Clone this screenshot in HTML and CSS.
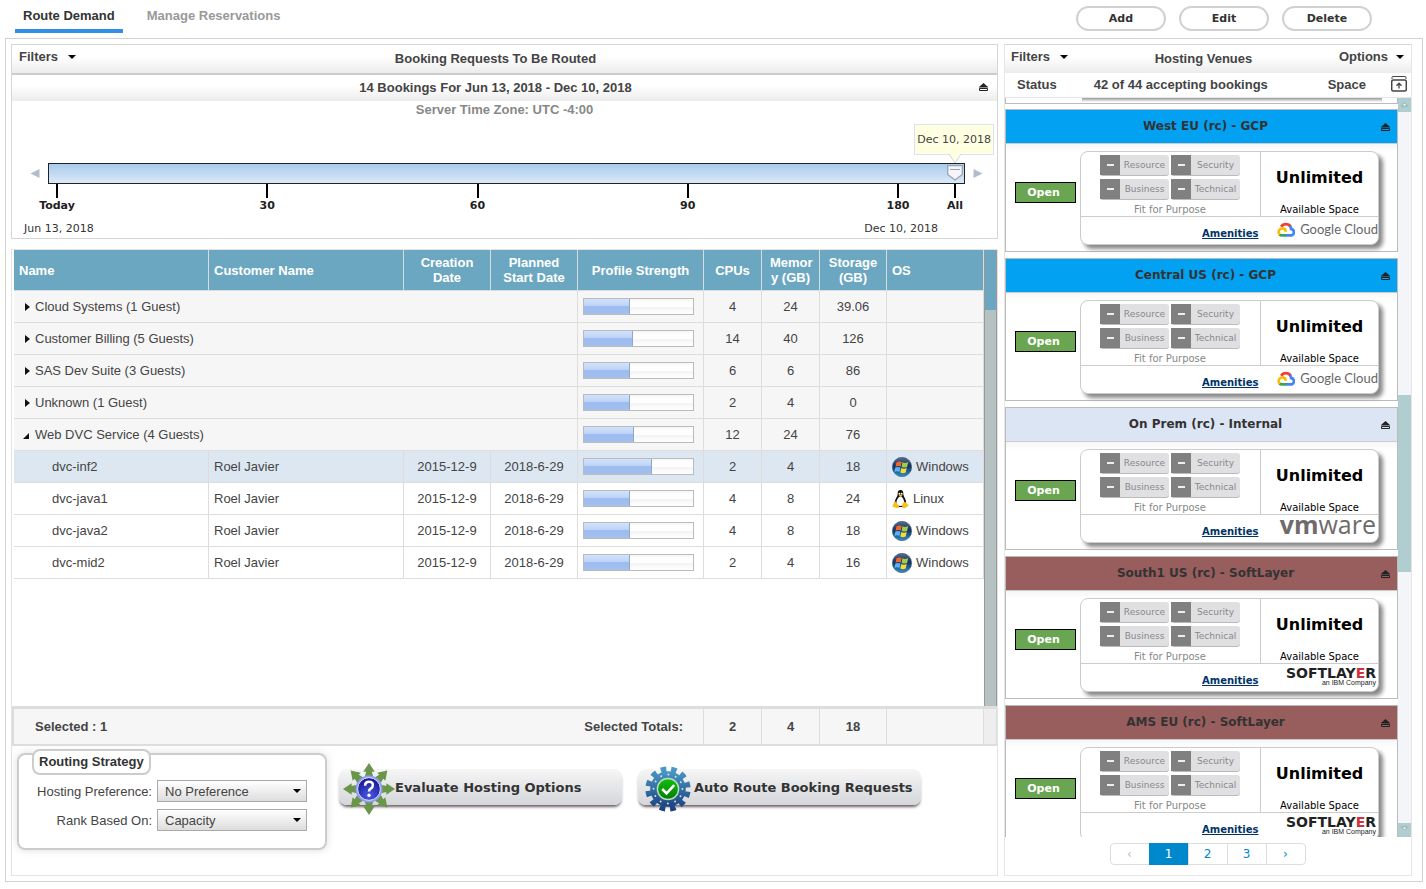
FILE: index.html
```html
<!DOCTYPE html>
<html lang="en">
<head>
    <meta charset="UTF-8">
    <meta name="viewport" content="width=device-width, initial-scale=1.0">
    <title>Route Demand</title>
    <link rel="stylesheet" href="styles.css">
</head>
<body>

    <!-- shared icons -->
    <svg class="sprite" aria-hidden="true">
        <defs>
            <linearGradient id="cogFill" x1="0" y1="0" x2="0" y2="1">
                <stop offset="0" stop-color="#4a97c4"/>
                <stop offset="1" stop-color="#1c4480"/>
            </linearGradient>
            <radialGradient id="ballFill" cx="0.5" cy="0.8" r="0.7">
                <stop offset="0" stop-color="#4a5ae8"/>
                <stop offset="1" stop-color="#1c1c94"/>
            </radialGradient>
            <linearGradient id="okFill" x1="0" y1="0" x2="0" y2="1">
                <stop offset="0" stop-color="#12c012"/>
                <stop offset="1" stop-color="#057a05"/>
            </linearGradient>
            <linearGradient id="orbFill" x1="0" y1="0" x2="0" y2="1">
                <stop offset="0" stop-color="#5b6c8a"/>
                <stop offset="0.45" stop-color="#16305c"/>
                <stop offset="1" stop-color="#2f93c8"/>
            </linearGradient>
            <path id="arrowOut" d="M0-27l6 9h-3l2 8h-10l2-8h-3z"/>
        </defs>
        <symbol id="eject" viewBox="0 0 9 8">
            <path d="M4.500 0l4.500 4v.5h-9v-.5z" fill="#222"/>
            <path d="M.5 5.500h8v2h-8z" fill="none" stroke="#222"/>
        </symbol>
        <symbol id="caret" viewBox="0 0 8 4">
            <path d="M0 0h8l-4 4z" fill="#000"/>
        </symbol>
        <symbol id="windows" viewBox="0 0 20 20">
            <circle cx="10" cy="10" r="9.700" fill="url(#orbFill)" stroke="#38577f" stroke-width=".6"/>
            <path d="M4.400 5.400q2.700-1.700 5.300-.3l-1 4.600q-2.500-1.400-5.200.2z" fill="#f0652f"/>
            <path d="M10.500 5.300q2.700 1.400 5.700-.2l-1.100 4.800q-2.900 1.400-5.500 0z" fill="#9ad04c"/>
            <path d="M3.300 10.800q2.600-1.500 5.200-.2l-1 4.400q-2.500-1.400-5.100.1z" fill="#53b4f8"/>
            <path d="M9.300 11q2.600 1.500 5.500 0l-1.100 4.500q-2.900 1.500-5.400 0z" fill="#fcd93b"/>
        </symbol>
        <symbol id="linux" viewBox="0 0 18 20">
            <path d="M9 .5c-2.600 0-3.200 2-3 4.500.1 2.200-3 5-3.200 8.500 0 3 3 5 6.200 5s6-2 6-5c0-3.500-2.900-6-3-8.500.1-2.500-.4-4.500-3-4.500z" fill="#111"/>
            <path d="M9 7c-1.500 0-4.500 4-4.300 7 .1 2.400 1.800 3.500 4.300 3.500s4.100-1 4.100-3.500c0-3-2.600-7-4.100-7z" fill="#fff"/>
            <circle cx="7.800" cy="4.500" r="1" fill="#fff"/>
            <circle cx="10.300" cy="4.500" r="1" fill="#fff"/>
            <path d="M7 6.200l2-1 2.200 1-2.100 1.600z" fill="#f5b400"/>
            <path d="M3.500 12.500l3.800 4.800c.8 1.700-.6 2.700-2.200 2.200l-4.600-1.300.6-2.500z" fill="#f5c211"/>
            <path d="M14 13l-3 1.800v3.300c.2 1.900 1.700 2.100 3 1.300l3.800-2.500-1.600-1.800z" fill="#f5c211"/>
        </symbol>
        <symbol id="gcloud" viewBox="0 0 18 15">
            <path d="M4.200 4.800a5.500 5.500 0 0 1 9.400 0" fill="none" stroke="#ea4335" stroke-width="2.800"/>
            <path d="M13 4.200q1 1.200 1.200 2.800a3.200 3.200 0 0 1-1 6.400h-4.200" fill="none" stroke="#4285f4" stroke-width="2.800"/>
            <path d="M9 13.400h-4q-1.500 0-2.500-1" fill="none" stroke="#34a853" stroke-width="2.800"/>
            <path d="M2.700 12.600c-2.300-2.800-.2-6.400 2.800-6.200 2.200.2 3.200 2 3.200 3.400" fill="none" stroke="#fbbc05" stroke-width="2.600"/>
        </symbol>
        <symbol id="question" viewBox="-27 -27 54 54">
            <g fill="#6a964c">
                <use href="#arrowOut"/>
                <use href="#arrowOut" transform="rotate(45)"/>
                <use href="#arrowOut" transform="rotate(90)"/>
                <use href="#arrowOut" transform="rotate(135)"/>
                <use href="#arrowOut" transform="rotate(180)"/>
                <use href="#arrowOut" transform="rotate(225)"/>
                <use href="#arrowOut" transform="rotate(270)"/>
                <use href="#arrowOut" transform="rotate(315)"/>
            </g>
            <circle r="14" fill="#8f9df5"/>
            <circle r="11.800" fill="url(#ballFill)" stroke="#dfe4ff"/>
            <path d="M-4-3.500q0-4 4-4t4 3.500q0 2-2 3.300-2 1.200-2 3.200" fill="none" stroke="#fff" stroke-width="2.600"/>
            <circle cy="6.500" r="1.700" fill="#fff"/>
        </symbol>
        <symbol id="cog" viewBox="-27 -27 54 54">
            <circle r="20.500" fill="none" stroke="url(#cogFill)" stroke-width="6" stroke-dasharray="5.600 5.130" stroke-dashoffset="8"/>
            <circle r="18.500" fill="url(#cogFill)"/>
            <circle r="15" fill="none" stroke="#cfe6f2" stroke-width="2" stroke-linecap="round" stroke-dasharray="0 7.854"/>
            <circle r="11" fill="url(#okFill)" stroke="#b9e0b9" stroke-width="1.500"/>
            <path d="M-6 0l4.500 4.500 8-8.500" fill="none" stroke="#fff" stroke-width="2.600"/>
        </symbol>
    </svg>

    <header class="topbar">
        <nav class="tabs">
            <a href="#" class="tab active">Route Demand</a>
            <a href="#" class="tab">Manage Reservations</a>
        </nav>
        <div class="actions">
            <button type="button" class="pill">Add</button>
            <button type="button" class="pill">Edit</button>
            <button type="button" class="pill">Delete</button>
        </div>
    </header>

    <main class="frame">

        <section class="left">
            <div class="bookings">
                <div class="panel-head">
                    <button type="button" class="menu">Filters <svg class="caret"><use href="#caret"/></svg></button>
                    <h2>Booking Requests To Be Routed</h2>
                </div>
                <div class="panel-head sub-head">
                    <h2>14 Bookings For Jun 13, 2018 - Dec 10, 2018</h2>
                    <svg class="eject"><use href="#eject"/></svg>
                </div>
                <p class="zone">Server Time Zone: UTC -4:00</p>

                <div class="slider">
                    <svg class="step" viewBox="0 0 9 9"><path d="M9 0v9l-9-4.500z"/></svg>
                    <div class="slider-box">
                        <input type="range" class="track" min="0" max="181" value="181" aria-label="Booking date">
                        <div class="tip">Dec 10, 2018</div>
                        <svg class="tip-arrow" viewBox="0 0 14 10"><path d="M1 0l6 9 6-9" fill="#ffffe1" stroke="#ccd3e6"/></svg>
                        <svg class="handle" viewBox="0 0 16 16"><path d="M.7.7h14.600v8.800l-7.300 5.500-7.300-5.500z" fill="#f6f6fa" stroke="#9aa3b5" stroke-width="1.300"/><path d="M3 4.500h10" stroke="#9aa3b5"/></svg>
                    </div>
                    <svg class="step" viewBox="0 0 9 9"><path d="M0 0v9l9-4.500z"/></svg>
                </div>
                <div class="scale">
                    <div class="scale-days">
                        <span class="mark">Today</span>
                        <span class="mark">30</span>
                        <span class="mark">60</span>
                        <span class="mark">90</span>
                        <span class="mark">180</span>
                    </div>
                    <span class="mark mark-all">All</span>
                </div>
                <div class="range">
                    <span>Jun 13, 2018</span>
                    <span>Dec 10, 2018</span>
                </div>
            </div>

            <div class="requests">
                <div class="grid">
                    <table class="grid-table">
                        <colgroup>
                            <col><col><col class="c-date"><col class="c-date"><col class="c-profile">
                            <col class="c-num"><col class="c-num"><col class="c-store"><col class="c-os">
                        </colgroup>
                        <thead>
                            <tr>
                                <th class="txt">Name</th>
                                <th class="txt">Customer Name</th>
                                <th>Creation Date</th>
                                <th>Planned Start Date</th>
                                <th>Profile Strength</th>
                                <th>CPUs</th>
                                <th>Memor<br>y (GB)</th>
                                <th>Storage (GB)</th>
                                <th class="txt">OS</th>
                            </tr>
                        </thead>
                        <tbody>
                            <tr class="group">
                                <td class="txt" colspan="4"><i class="closed"></i>Cloud Systems (1 Guest)</td>
                                <td><div class="bar"><span style="width:42%"></span></div></td>
                                <td>4</td>
                                <td>24</td>
                                <td>39.06</td>
                                <td></td>
                            </tr>
                            <tr class="group">
                                <td class="txt" colspan="4"><i class="closed"></i>Customer Billing (5 Guests)</td>
                                <td><div class="bar"><span style="width:45%"></span></div></td>
                                <td>14</td>
                                <td>40</td>
                                <td>126</td>
                                <td></td>
                            </tr>
                            <tr class="group">
                                <td class="txt" colspan="4"><i class="closed"></i>SAS Dev Suite (3 Guests)</td>
                                <td><div class="bar"><span style="width:42%"></span></div></td>
                                <td>6</td>
                                <td>6</td>
                                <td>86</td>
                                <td></td>
                            </tr>
                            <tr class="group">
                                <td class="txt" colspan="4"><i class="closed"></i>Unknown (1 Guest)</td>
                                <td><div class="bar"><span style="width:42%"></span></div></td>
                                <td>2</td>
                                <td>4</td>
                                <td>0</td>
                                <td></td>
                            </tr>
                            <tr class="group">
                                <td class="txt" colspan="4"><i class="opened"></i>Web DVC Service (4 Guests)</td>
                                <td><div class="bar"><span style="width:46%"></span></div></td>
                                <td>12</td>
                                <td>24</td>
                                <td>76</td>
                                <td></td>
                            </tr>
                            <tr class="selected">
                                <td class="txt guest">dvc-inf2</td>
                                <td class="txt">Roel Javier</td>
                                <td>2015-12-9</td>
                                <td>2018-6-29</td>
                                <td><div class="bar"><span style="width:62%"></span></div></td>
                                <td>2</td>
                                <td>4</td>
                                <td>18</td>
                                <td class="txt"><span class="os"><svg class="os-icon"><use href="#windows"/></svg>Windows</span></td>
                            </tr>
                            <tr>
                                <td class="txt guest">dvc-java1</td>
                                <td class="txt">Roel Javier</td>
                                <td>2015-12-9</td>
                                <td>2018-6-29</td>
                                <td><div class="bar"><span style="width:42%"></span></div></td>
                                <td>4</td>
                                <td>8</td>
                                <td>24</td>
                                <td class="txt"><span class="os"><svg class="os-icon linux"><use href="#linux"/></svg>Linux</span></td>
                            </tr>
                            <tr>
                                <td class="txt guest">dvc-java2</td>
                                <td class="txt">Roel Javier</td>
                                <td>2015-12-9</td>
                                <td>2018-6-29</td>
                                <td><div class="bar"><span style="width:42%"></span></div></td>
                                <td>4</td>
                                <td>8</td>
                                <td>18</td>
                                <td class="txt"><span class="os"><svg class="os-icon"><use href="#windows"/></svg>Windows</span></td>
                            </tr>
                            <tr>
                                <td class="txt guest">dvc-mid2</td>
                                <td class="txt">Roel Javier</td>
                                <td>2015-12-9</td>
                                <td>2018-6-29</td>
                                <td><div class="bar"><span style="width:42%"></span></div></td>
                                <td>2</td>
                                <td>4</td>
                                <td>16</td>
                                <td class="txt"><span class="os"><svg class="os-icon"><use href="#windows"/></svg>Windows</span></td>
                            </tr>
                        </tbody>
                    </table>
                    <div class="grid-scroll"></div>
                </div>

                <div class="totals">
                    <span class="picked">Selected : 1</span>
                    <span class="totals-label">Selected Totals:</span>
                    <span class="total">2</span>
                    <span class="total">4</span>
                    <span class="total store">18</span>
                    <span class="total os-total"></span>
                    <span class="total-end"></span>
                </div>

                <div class="routing">
                    <form class="strategy">
                        <h3>Routing Strategy</h3>
                        <label for="preference">Hosting Preference:</label>
                        <div class="select">
                            <select id="preference"><option>No Preference</option></select>
                            <svg class="caret"><use href="#caret"/></svg>
                        </div>
                        <label for="rank">Rank Based On:</label>
                        <div class="select">
                            <select id="rank"><option>Capacity</option></select>
                            <svg class="caret"><use href="#caret"/></svg>
                        </div>
                    </form>
                    <button type="button" class="big"><svg class="big-icon"><use href="#question"/></svg>Evaluate Hosting Options</button>
                    <button type="button" class="big"><svg class="big-icon"><use href="#cog"/></svg>Auto Route Booking Requests</button>
                </div>
            </div>
        </section>

        <section class="right">
            <div class="panel-head venues-head">
                <button type="button" class="menu">Filters <svg class="caret"><use href="#caret"/></svg></button>
                <h2>Hosting Venues</h2>
                <button type="button" class="menu options">Options <svg class="caret"><use href="#caret"/></svg></button>
            </div>
            <div class="venues-sub">
                <span>Status</span>
                <span>42 of 44 accepting bookings</span>
                <span class="space">Space</span>
                <svg class="collapse" viewBox="0 0 16 16" fill="none" stroke="#444"><path d="M1 3v-1.500q0-1 1-1h12q1 0 1 1v1.500"/><rect x=".7" y="4" width="14.600" height="11" rx="1.500" stroke-width="1.500"/><path d="M8 12.500v-5m-2.500 2.200l2.500-2.500 2.500 2.500" stroke-width="1.300"/></svg>
            </div>

            <div class="venues">
                <div class="venue-list">
                    <div class="venue-peek"></div>

                    <article class="venue">
                        <h3 class="gcp">West EU (rc) - GCP<svg class="eject"><use href="#eject"/></svg></h3>
                        <div class="venue-body">
                            <button type="button" class="open">Open</button>
                            <div class="info">
                                <div class="fit">
                                    <div class="chips">
                                        <span class="chip"><b></b>Resource</span>
                                        <span class="chip"><b></b>Security</span>
                                        <span class="chip"><b></b>Business</span>
                                        <span class="chip"><b></b>Technical</span>
                                    </div>
                                    <p>Fit for Purpose</p>
                                </div>
                                <div class="space-left"><strong>Unlimited</strong><p>Available Space</p></div>
                                <div class="extras">
                                    <a href="#">Amenities</a>
                                    <span class="brand google"><svg><use href="#gcloud"/></svg><span>Google Cloud</span></span>
                                </div>
                            </div>
                        </div>
                    </article>

                    <article class="venue">
                        <h3 class="gcp">Central US (rc) - GCP<svg class="eject"><use href="#eject"/></svg></h3>
                        <div class="venue-body">
                            <button type="button" class="open">Open</button>
                            <div class="info">
                                <div class="fit">
                                    <div class="chips">
                                        <span class="chip"><b></b>Resource</span>
                                        <span class="chip"><b></b>Security</span>
                                        <span class="chip"><b></b>Business</span>
                                        <span class="chip"><b></b>Technical</span>
                                    </div>
                                    <p>Fit for Purpose</p>
                                </div>
                                <div class="space-left"><strong>Unlimited</strong><p>Available Space</p></div>
                                <div class="extras">
                                    <a href="#">Amenities</a>
                                    <span class="brand google"><svg><use href="#gcloud"/></svg><span>Google Cloud</span></span>
                                </div>
                            </div>
                        </div>
                    </article>

                    <article class="venue">
                        <h3 class="internal">On Prem (rc) - Internal<svg class="eject"><use href="#eject"/></svg></h3>
                        <div class="venue-body">
                            <button type="button" class="open">Open</button>
                            <div class="info">
                                <div class="fit">
                                    <div class="chips">
                                        <span class="chip"><b></b>Resource</span>
                                        <span class="chip"><b></b>Security</span>
                                        <span class="chip"><b></b>Business</span>
                                        <span class="chip"><b></b>Technical</span>
                                    </div>
                                    <p>Fit for Purpose</p>
                                </div>
                                <div class="space-left"><strong>Unlimited</strong><p>Available Space</p></div>
                                <div class="extras">
                                    <a href="#">Amenities</a>
                                    <span class="brand vmware"><b>vm</b>ware</span>
                                </div>
                            </div>
                        </div>
                    </article>

                    <article class="venue">
                        <h3 class="softlayer">South1 US (rc) - SoftLayer<svg class="eject"><use href="#eject"/></svg></h3>
                        <div class="venue-body">
                            <button type="button" class="open">Open</button>
                            <div class="info">
                                <div class="fit">
                                    <div class="chips">
                                        <span class="chip"><b></b>Resource</span>
                                        <span class="chip"><b></b>Security</span>
                                        <span class="chip"><b></b>Business</span>
                                        <span class="chip"><b></b>Technical</span>
                                    </div>
                                    <p>Fit for Purpose</p>
                                </div>
                                <div class="space-left"><strong>Unlimited</strong><p>Available Space</p></div>
                                <div class="extras">
                                    <a href="#">Amenities</a>
                                    <span class="brand soft">SOFTLAY<em>E</em>R<small>an IBM Company</small></span>
                                </div>
                            </div>
                        </div>
                    </article>

                    <article class="venue">
                        <h3 class="softlayer">AMS EU (rc) - SoftLayer<svg class="eject"><use href="#eject"/></svg></h3>
                        <div class="venue-body">
                            <button type="button" class="open">Open</button>
                            <div class="info">
                                <div class="fit">
                                    <div class="chips">
                                        <span class="chip"><b></b>Resource</span>
                                        <span class="chip"><b></b>Security</span>
                                        <span class="chip"><b></b>Business</span>
                                        <span class="chip"><b></b>Technical</span>
                                    </div>
                                    <p>Fit for Purpose</p>
                                </div>
                                <div class="space-left"><strong>Unlimited</strong><p>Available Space</p></div>
                                <div class="extras">
                                    <a href="#">Amenities</a>
                                    <span class="brand soft">SOFTLAY<em>E</em>R<small>an IBM Company</small></span>
                                </div>
                            </div>
                        </div>
                    </article>
                </div>
                <div class="venue-scroll">
                    <svg viewBox="0 0 12 14"><path d="M3 8l3-3 3 3z" fill="#fff" stroke="#8aa"/></svg>
                    <div class="thumb"></div>
                    <svg viewBox="0 0 12 14"><path d="M3 4l3 3 3-3z" fill="#fff" stroke="#8aa"/></svg>
                </div>
            </div>

            <nav class="pager">
                <button type="button" disabled>‹</button>
                <button type="button" class="current">1</button>
                <button type="button">2</button>
                <button type="button">3</button>
                <button type="button">›</button>
            </nav>
        </section>
    </main>

</body>
</html>
```

FILE: styles.css
```css
* {
    box-sizing: border-box;
}

body {
    margin: 0;
    background-color: #fff;
    color: #444;
    font-family: 'Liberation Sans', Arial, sans-serif;
    font-size: 13px;
    line-height: 15px;
}

h2, h3, p {
    margin: 0;
    font-size: 13px;
}

button, select, input {
    margin: 0;
    font-family: inherit;
    font-size: 13px;
    color: inherit;
}

svg {
    display: block;
    flex: none;
}

.sprite {
    position: absolute;
    width: 0;
    height: 0;
}

.caret {
    width: 8px;
    height: 4px;
}

.eject {
    width: 9px;
    height: 8px;
}

/* top bar */
.topbar {
    display: flex;
    justify-content: space-between;
    padding: 0 54px 0 15px;
    height: 38px;
}

.tabs {
    display: flex;
    gap: 16px;
}

.tab {
    height: 33px;
    padding: 8px 8px 0;
    border-bottom: 4px solid transparent;
    color: #999;
    font-weight: bold;
    text-decoration: none;
}

.tab.active {
    color: #333;
    border-color: #3190e6;
}

.actions {
    display: flex;
    gap: 13px;
    padding-top: 6px;
}

.pill {
    width: 90px;
    height: 25px;
    border: 2px solid #d0d0d0;
    border-radius: 13px;
    background-color: #fff;
    font: bold 11px 'DejaVu Sans', Verdana, sans-serif;
    color: #333;
}

/* page frame */
.frame {
    display: flex;
    gap: 6px;
    margin: 0 3px 6px 5px;
    padding: 5px 10px 5px 5px;
    border: 1px solid #d2d2d2;
}

.left {
    flex: 1;
    min-width: 0;
}

.right {
    display: flex;
    flex-direction: column;
    width: 408px;
    border: 1px solid #e6e6e6;
    border-top-color: #d6d6d6;
}

.panel-head {
    display: grid;
    grid-template-columns: 1fr auto 1fr;
    align-items: center;
    height: 28px;
    padding: 0 7px 2px;
    background: linear-gradient(#fff 40%, #ececec);
}

.panel-head h2 {
    grid-column: 2;
    padding-right: 18px;
}

.menu {
    display: flex;
    align-items: center;
    gap: 10px;
    justify-self: start;
    padding: 0 0 3px;
    border: 0;
    background: none;
    font-weight: bold;
}

.options {
    justify-self: end;
    gap: 8px;
}

/* bookings */
.bookings {
    border: 1px solid #d6d6d6;
    height: 195px;
}

.sub-head {
    border-top: 2px solid #ccc;
}

.sub-head .eject {
    justify-self: end;
    margin-right: 2px;
}

.zone {
    padding-top: 1px;
    text-align: center;
    font-weight: bold;
    color: #888;
}

.slider {
    display: flex;
    align-items: center;
    gap: 8px;
    padding: 46px 14px 0 18px;
}

.step {
    width: 10px;
    height: 9px;
    fill: #b4bccb;
}

.slider-box {
    position: relative;
    flex: 1;
}

.track {
    display: block;
    width: 100%;
    height: 21px;
    border: 1px solid #222;
    background: linear-gradient(#a9cbec, #dbe9f7);
    appearance: none;
}

.track::-webkit-slider-thumb {
    appearance: none;
    width: 16px;
    height: 16px;
    opacity: 0;
}

.handle {
    position: absolute;
    right: 2px;
    top: 2px;
    width: 16px;
    height: 16px;
    pointer-events: none;
}

.tip {
    position: absolute;
    right: -29px;
    bottom: 29px;
    padding: 7px 2px;
    border: 1px solid #dde0ee;
    background-color: #ffffe1;
    font: 11px/15px 'DejaVu Sans', Verdana, sans-serif;
    white-space: nowrap;
}

.tip-arrow {
    position: absolute;
    right: 3px;
    bottom: 20px;
    width: 14px;
    height: 10px;
}

.scale {
    display: flex;
    padding: 0 15px;
}

.scale-days {
    display: flex;
    flex: 1;
    justify-content: space-between;
}

.mark {
    display: flex;
    flex-direction: column;
    align-items: center;
    width: 60px;
    font: bold 11px/16px 'DejaVu Sans', Verdana, sans-serif;
    color: #222;
}

.mark::before {
    content: "";
    width: 2px;
    height: 14px;
    background-color: #000;
}

.mark-all {
    width: 54px;
}

.range {
    display: flex;
    justify-content: space-between;
    padding: 7px 59px 0 12px;
    font: 11px/15px 'DejaVu Sans', Verdana, sans-serif;
    color: #333;
}

/* requests grid */
.requests {
    margin-top: 10px;
    border: 1px solid #e3e3e3;
}

.grid {
    display: flex;
    min-height: 457px;
    padding-left: 2px;
    border-bottom: 1px solid #ddd;
}

.grid-table {
    flex: 1;
    align-self: flex-start;
    width: 100%;
    table-layout: fixed;
    border-spacing: 0;
}

.c-date { width: 87px; }
.c-profile { width: 126px; }
.c-num { width: 58px; }
.c-store { width: 67px; }
.c-os { width: 97px; }

th {
    height: 41px;
    padding: 0 8px;
    background-color: #6ca7c1;
    border-right: 1px solid #d5dde1;
    border-bottom: 1px solid #d5dde1;
    color: #fff;
}

td {
    height: 32px;
    padding: 0 5px;
    border-right: 1px solid #ddd;
    border-bottom: 1px solid #ddd;
    text-align: center;
}

.txt {
    padding-left: 5px;
    text-align: left;
}

.group td {
    background-color: #f6f6f6;
}

.selected td {
    background-color: #dce7f2;
}

.guest {
    padding-left: 38px;
}

.closed, .opened {
    display: inline-block;
    width: 5px;
    height: 8px;
    margin: 0 5px 0 6px;
    background-color: #111;
    clip-path: polygon(0 0, 100% 50%, 0 100%);
}

.opened {
    width: 6px;
    height: 6px;
    margin: 0 6px 0 4px;
    clip-path: polygon(100% 0, 100% 100%, 0 100%);
}

.bar {
    height: 17px;
    margin-right: 4px;
    border: 1px solid #bbb;
    background: linear-gradient(#f4f4f4, #fff 20%, #fff 50%, #f4f4f4 55%, #fff);
}

.bar span {
    display: block;
    height: 15px;
    border-right: 1px solid #91a8cc;
    background: linear-gradient(#d3e2fb, #bdd3f7 45%, #9dbdee 50%, #a3c0ee);
}

.os {
    display: flex;
    align-items: center;
    gap: 4px;
}

.os-icon {
    width: 20px;
    height: 20px;
}

.os-icon.linux {
    width: 17px;
}

.grid-scroll {
    width: 13px;
    border-left: 1px solid #999;
    border-right: 1px solid #999;
    background: linear-gradient(#6ca7c1 60px, #b6c1c2 60px);
}

.totals {
    display: flex;
    align-items: center;
    height: 39px;
    border: 2px solid #ddd;
    border-right: 1px solid #ddd;
    background-color: #f6f6f6;
    font-weight: bold;
    line-height: 35px;
}

.picked {
    flex: 1;
    padding-left: 21px;
}

.totals-label {
    padding-right: 20px;
}

.total {
    width: 58px;
    border-left: 1px solid #ddd;
    text-align: center;
}

.store {
    width: 67px;
}

.os-total {
    width: 97px;
    height: 35px;
}

.total-end {
    width: 13px;
    height: 35px;
    border-left: 1px solid #ddd;
    background-color: #eee;
}

.routing {
    display: flex;
    align-items: flex-start;
    gap: 12px;
    height: 129px;
    padding: 7px 5px;
}

.strategy {
    position: relative;
    display: grid;
    grid-template-columns: auto 150px;
    align-content: start;
    align-items: center;
    gap: 7px 5px;
    width: 310px;
    height: 97px;
    padding: 25px 18px 0 0;
    border: 2px solid #ccc;
    border-radius: 8px;
    box-shadow: 0 0 8px #ddd;
    text-align: right;
}

.strategy h3 {
    position: absolute;
    top: -6px;
    left: 13px;
    padding: 3px 5px 4px;
    border: 2px solid #ccc;
    border-radius: 8px;
    background-color: #fff;
    color: #333;
}

.select {
    position: relative;
}

.select select {
    display: block;
    width: 100%;
    height: 22px;
    padding: 0 7px;
    border: 1px solid #aaa;
    border-radius: 0;
    background: linear-gradient(#fff, #ddd);
    appearance: none;
}

.select .caret {
    position: absolute;
    right: 6px;
    top: 9px;
    pointer-events: none;
}

.big {
    display: flex;
    align-items: center;
    width: 283px;
    height: 36px;
    margin-top: 16px;
    padding: 0 4px;
    border: 0;
    border-radius: 8px;
    background: linear-gradient(#f6f6f6, #d4d6da);
    box-shadow: 0 3px 3px -1px #6b5f63;
    font: bold 13px 'DejaVu Sans', Verdana, sans-serif;
    color: #333;
}

.big + .big {
    margin-left: 4px;
}

.big-icon {
    width: 52px;
    height: 52px;
    margin-top: 4px;
}

/* venues */
.venues-head {
    padding-left: 6px;
}

.venues-head h2 {
    padding-right: 8px;
}

.venues-sub {
    display: flex;
    align-items: center;
    height: 25px;
    padding: 0 4px 2px 12px;
    border-bottom: 1px solid #e6e6e6;
    font-weight: bold;
    gap: 37px;
}

.space {
    margin-left: auto;
}

.collapse {
    width: 16px;
    height: 16px;
    margin-left: -12px;
}

.venues {
    display: flex;
    flex: 1 1 0;
    min-height: 0;
    overflow: hidden;
}

.venue-list {
    flex: 1;
    overflow: hidden;
}

.venue-peek {
    height: 6px;
    margin-bottom: 5px;
    border: 1px solid #bbb;
    border-top: 0;
    background: linear-gradient(#999, #fff 4px) 76px 0 / 300px 4px no-repeat;
}

.venue {
    height: 143px;
    margin-bottom: 6px;
    border: 1px solid #bbb;
}

.venue h3 {
    display: grid;
    grid-template-columns: 1fr auto 1fr;
    align-items: center;
    height: 34px;
    padding: 0 7px 0 15px;
    border-bottom: 1px solid #ccc;
    font-family: 'DejaVu Sans', Verdana, sans-serif;
    font-size: 12px;
    color: #333;
}

.venue h3::before {
    content: "";
}

.venue h3 .eject {
    justify-self: end;
}

.gcp { background-color: #02a1f2; }
.internal { background-color: #dce5f4; }
.softlayer { background-color: #985d5d; }

.venue-body {
    display: flex;
    align-items: flex-start;
    gap: 4px;
    padding: 7px 18px 0 9px;
    background: linear-gradient(#f6f6f6, #fff 8px);
}

.open {
    width: 61px;
    height: 21px;
    margin-top: 31px;
    padding: 0 4px 0 0;
    border: 1px solid #000;
    background-color: #6aa651;
    color: #fff;
    font: bold 11px 'DejaVu Sans', Verdana, sans-serif;
}

.info {
    display: grid;
    grid-template-columns: 180px 1fr;
    grid-template-rows: 64px 1fr;
    flex: 1;
    height: 94px;
    border: 1px solid #ccc;
    border-radius: 8px;
    background-color: #fff;
    box-shadow: 4px 4px 4px #888;
    font: 10px/12px 'DejaVu Sans', Verdana, sans-serif;
    overflow: hidden;
}

.info p {
    font-size: 10px;
    text-align: center;
    white-space: nowrap;
}

.fit {
    padding: 3px 1px 0 0;
    border-right: 1px solid #ccc;
    color: #888;
}

.chips {
    display: grid;
    grid-template-columns: 69px 69px;
    justify-content: center;
    gap: 4px 2px;
    margin-bottom: 5px;
}

.chip {
    display: grid;
    grid-template-columns: 20px 1fr;
    align-items: center;
    justify-items: center;
    height: 20px;
    border-radius: 3px;
    background-color: #e0e0e2;
    box-shadow: 0 1px 0 #bbb;
    font-size: 9px;
}

.chip b {
    width: 20px;
    height: 20px;
    background: linear-gradient(#eee, #eee) center / 7px 2px no-repeat #808080;
}

.space-left {
    display: flex;
    flex-direction: column;
    justify-content: space-between;
    padding-top: 16px;
    text-align: center;
    color: #000;
}

.space-left strong {
    font-size: 16px;
    line-height: 20px;
}

.extras {
    display: flex;
    grid-column: 1 / 3;
    justify-content: space-between;
    border-top: 1px solid #ccc;
    padding-left: 121px;
}

.extras a {
    padding-top: 11px;
    color: #003366;
    font-weight: bold;
}

.brand {
    white-space: nowrap;
}

.google {
    display: flex;
    gap: 5px;
    font: 13px/24px Lato, sans-serif;
    color: #666;
}

.google svg {
    width: 18px;
    height: 15px;
    margin-top: 5px;
}

.vmware {
    padding-right: 2px;
    font: 25px/18px 'Open Sans', sans-serif;
    color: #6f6a6b;
}

.soft {
    padding: 3px 2px 0 0;
    font-weight: bold;
    color: #222;
    font-size: 14px;
}

.soft em {
    color: #d0313d;
    font-style: normal;
}

.soft small {
    display: block;
    font: 7px/7px 'Liberation Sans', Arial, sans-serif;
    text-align: right;
}

.venue-scroll {
    display: flex;
    flex-direction: column;
    justify-content: space-between;
    width: 13px;
    background-color: #f3f5f8;
}

.venue-scroll svg {
    width: 13px;
    height: 14px;
    background-color: #b0cdcf;
}

.thumb {
    height: 177px;
    margin-top: 32px;
    background-color: #b0cdcf;
}

.pager {
    display: flex;
    justify-content: center;
    padding: 6px 0 10px;
    height: 38px;
}

.pager button {
    width: 40px;
    height: 22px;
    margin-left: -1px;
    padding: 0;
    border: 1px solid #ddd;
    background-color: #fff;
    color: #0088cc;
    font: 12px 'DejaVu Sans', Verdana, sans-serif;
}

.pager button:first-child {
    border-radius: 4px 0 0 4px;
    color: #bbb;
}

.pager button:last-child {
    border-radius: 0 4px 4px 0;
}

.pager .current {
    border-color: #0088cc;
    background-color: #0088cc;
    color: #fff;
}
```
